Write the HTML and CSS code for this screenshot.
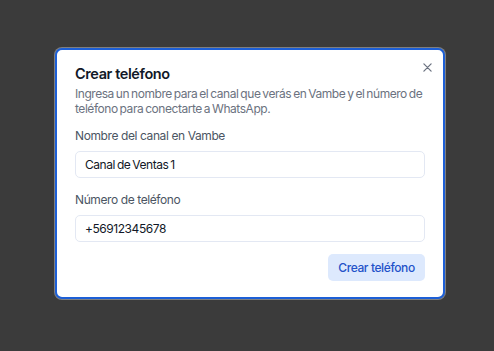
FILE: index.html
```html
<!DOCTYPE html>
<html lang="es">
<head>
    <meta charset="UTF-8">
    <title>Crear teléfono</title>
    <link rel="stylesheet" href="styles.css">
</head>
<body>
    <div class="overlay">
        <div class="dialog">
            <button class="close" aria-label="Cerrar">
                <svg width="9" height="9" viewBox="0 0 10 10"><path d="M1 1L9 9M9 1L1 9" stroke="#6b7280" stroke-width="1.4" stroke-linecap="round"/></svg>
            </button>
            <h2 class="title">Crear teléfono</h2>
            <p class="desc">Ingresa un nombre para el canal que verás en Vambe y el número de teléfono para conectarte a WhatsApp.</p>

            <label class="field">
                <span class="label">Nombre del canal en Vambe</span>
                <input type="text" class="input" value="Canal de Ventas 1">
            </label>

            <label class="field">
                <span class="label">Número de teléfono</span>
                <input type="text" class="input" value="+56912345678">
            </label>

            <div class="actions">
                <button class="btn">Crear teléfono</button>
            </div>
        </div>
    </div>
</body>
</html>
```

FILE: styles.css
```css
* {
    box-sizing: border-box;
}

body {
    margin: 0;
    background: #3b3b3b;
    font-family: Inter, "Noto Sans", sans-serif;
}

.overlay {
    height: 351px;
    padding-top: 48px;
    padding-left: 55px;
}

.dialog {
    position: relative;
    width: 390px;
    background: #fff;
    border: 2px solid #1d5fd6;
    border-radius: 7px;
    box-shadow: 0 0 0 1px rgba(255,255,255,0.35);
    padding: 14px 18px 16px 18px;
}

.close {
    position: absolute;
    top: 11px;
    right: 9px;
    display: flex;
    border: none;
    background: none;
    padding: 2px;
    cursor: pointer;
}

.title {
    margin: 0;
    font-size: 14.5px;
    font-weight: 600;
    color: #111827;
    line-height: 20px;
    letter-spacing: -0.4px;
}

.desc {
    margin: 2px 0 0;
    font-size: 12px;
    line-height: 15px;
    color: #6b7280;
    letter-spacing: -0.45px;
    word-spacing: -1px;
}

.field {
    display: flex;
    flex-direction: column;
    margin-top: 12px;
}

.label {
    font-size: 12px;
    color: #4b5563;
    line-height: 16px;
    letter-spacing: -0.4px;
    margin-bottom: 7px;
}

.input {
    width: 100%;
    height: 27px;
    border: 1px solid #e3e8f3;
    border-radius: 5px;
    padding: 0 9px;
    font-family: inherit;
    font-size: 12px;
    color: #111827;
    letter-spacing: -0.45px;
    word-spacing: -1px;
    outline: none;
}

.field + .field {
    margin-top: 14px;
}

.actions {
    display: flex;
    justify-content: flex-end;
    margin-top: 12px;
}

.btn {
    height: 27px;
    width: 97px;
    padding: 0;
    border: none;
    border-radius: 5px;
    background: #dde9fd;
    color: #2352c9;
    font-family: inherit;
    font-size: 12px;
    font-weight: 500;
    letter-spacing: -0.4px;
    cursor: pointer;
}
```
